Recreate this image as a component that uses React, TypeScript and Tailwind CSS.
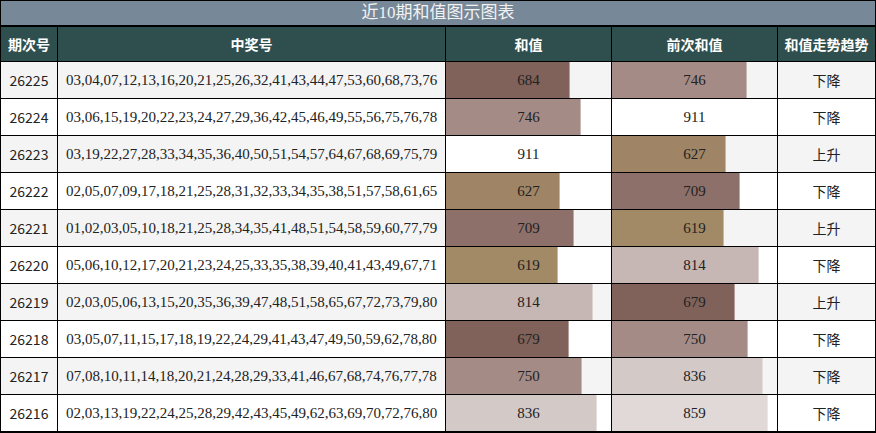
import React from 'react'

type Row = {
  issue: string
  nums: string
  sum: number
  prev: number
  trend: string
}

const rows: Row[] = [
  { issue: '26225', nums: '03,04,07,12,13,16,20,21,25,26,32,41,43,44,47,53,60,68,73,76', sum: 684, prev: 746, trend: '下降' },
  { issue: '26224', nums: '03,06,15,19,20,22,23,24,27,29,36,42,45,46,49,55,56,75,76,78', sum: 746, prev: 911, trend: '下降' },
  { issue: '26223', nums: '03,19,22,27,28,33,34,35,36,40,50,51,54,57,64,67,68,69,75,79', sum: 911, prev: 627, trend: '上升' },
  { issue: '26222', nums: '02,05,07,09,17,18,21,25,28,31,32,33,34,35,38,51,57,58,61,65', sum: 627, prev: 709, trend: '下降' },
  { issue: '26221', nums: '01,02,03,05,10,18,21,25,28,34,35,41,48,51,54,58,59,60,77,79', sum: 709, prev: 619, trend: '上升' },
  { issue: '26220', nums: '05,06,10,12,17,20,21,23,24,25,33,35,38,39,40,41,43,49,67,71', sum: 619, prev: 814, trend: '下降' },
  { issue: '26219', nums: '02,03,05,06,13,15,20,35,36,39,47,48,51,58,65,67,72,73,79,80', sum: 814, prev: 679, trend: '上升' },
  { issue: '26218', nums: '03,05,07,11,15,17,18,19,22,24,29,41,43,47,49,50,59,62,78,80', sum: 679, prev: 750, trend: '下降' },
  { issue: '26217', nums: '07,08,10,11,14,18,20,21,24,28,29,33,41,46,67,68,74,76,77,78', sum: 750, prev: 836, trend: '下降' },
  { issue: '26216', nums: '02,03,13,19,22,24,25,28,29,42,43,45,49,62,63,69,70,72,76,80', sum: 836, prev: 859, trend: '下降' },
]

const MAX = 911

// colour of each bar, by value
const barColor: Record<number, string> = {
  619: 'bg-[#a28a67]',
  627: 'bg-[#9f8565]',
  679: 'bg-[#80625a]',
  684: 'bg-[#80625a]',
  709: 'bg-[#8d7069]',
  746: 'bg-[#a58b86]',
  750: 'bg-[#a58b86]',
  814: 'bg-[#c7b7b4]',
  836: 'bg-[#d3c9c7]',
  859: 'bg-[#e1d9d8]',
  911: 'bg-white',
}

const serif = "font-['Liberation_Serif','Noto_Sans_CJK_SC',serif]"
const sans = "font-['Noto_Sans_CJK_SC','Noto_Sans',sans-serif]"

function BarCell({ value, bg }: { value: number; bg: string }) {
  return (
    <div className={`relative h-9 ${bg}`}>
      <div
        className={`absolute inset-y-0 left-0 border-r border-white/40 ${barColor[value]}`}
        style={{ width: `${(value / MAX) * 100}%` }}
      />
      <div className={`relative flex h-full items-center justify-center text-[15px] text-[#222] ${serif}`}>
        {value}
      </div>
    </div>
  )
}

function App() {
  return (
    <div className="w-[876px] h-[433px] bg-black p-px grid grid-cols-[56px_387px_165px_165px_97px] grid-rows-[25px_34px_repeat(10,36px)] gap-px content-start">
      <div
        className={`col-span-5 mb-px flex items-center justify-center bg-[#778899] text-[17px] text-[#f2f2f2] ${serif}`}
      >
        近10期和值图示图表
      </div>

      {['期次号', '中奖号', '和值', '前次和值', '和值走势趋势'].map((h) => (
        <div
          key={h}
          className={`flex items-center justify-center bg-[#2f4f4f] text-[14px] font-bold text-white ${sans}`}
        >
          {h}
        </div>
      ))}

      {rows.map((r, i) => {
        const bg = i % 2 === 0 ? 'bg-[#f4f4f4]' : 'bg-white'
        return (
          <React.Fragment key={r.issue}>
            <div className={`flex items-center justify-center text-[14px] text-[#222] ${bg} ${sans}`}>
              {r.issue}
            </div>
            <div className={`flex items-center justify-center text-[15px] text-[#222] ${bg} ${serif}`}>
              {r.nums}
            </div>
            <BarCell value={r.sum} bg={bg} />
            <BarCell value={r.prev} bg={bg} />
            <div className={`flex items-center justify-center text-[14px] text-[#222] ${bg} ${sans}`}>
              {r.trend}
            </div>
          </React.Fragment>
        )
      })}
    </div>
  )
}

export default App
